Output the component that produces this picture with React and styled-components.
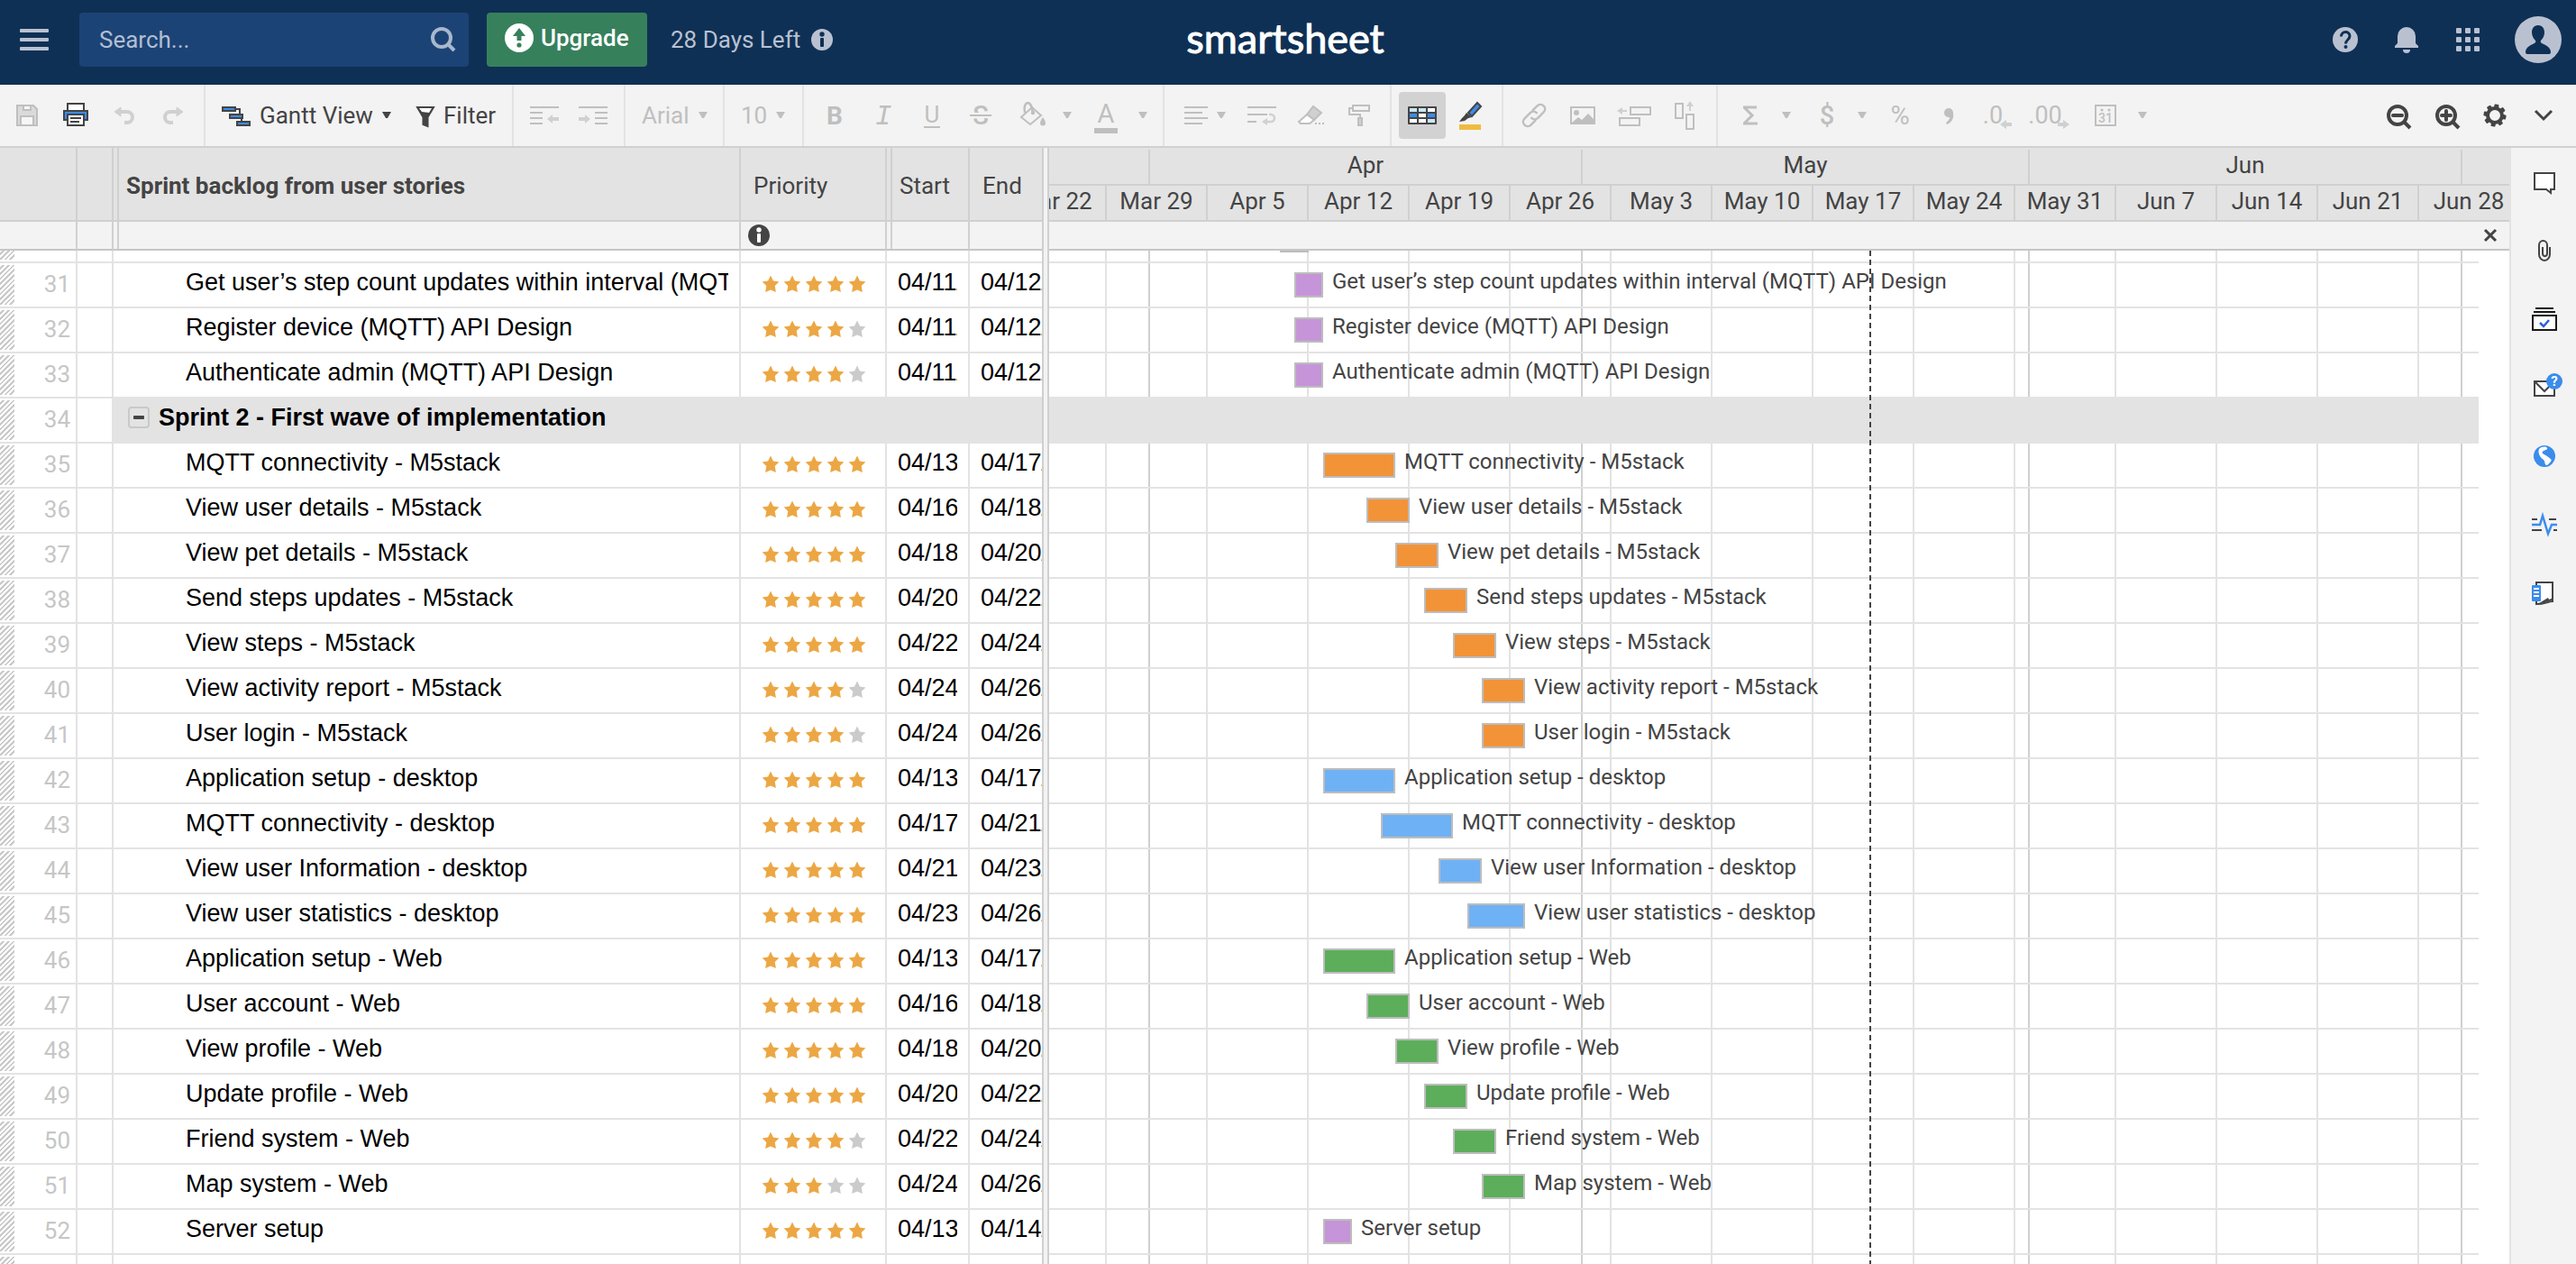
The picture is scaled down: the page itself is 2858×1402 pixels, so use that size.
import React from "react";
import styled, { createGlobalStyle, css } from "styled-components";

const GlobalStyle = createGlobalStyle`
  *, *::before, *::after { box-sizing: border-box; }
  html, body { margin: 0; height: 100%; }
  #root { height: 100%; }
  body { overflow: hidden; background: #fff; }
  body, button, input { font-family: Roboto, "Liberation Sans", sans-serif; font-size: 26px; }
  button { margin: 0; padding: 0; border: 0; background: none; color: inherit; cursor: pointer; }
  svg { display: block; flex: none; overflow: visible; }
`;

const DAY = 16;
const WEEK = 112;
const CHART_LEAD = 64;
const INK = "#444444";
const MUTED = "#bfbfbf";
const PALE = "#d0d0d0";
const BLUE = "#3b8ceb";

const C = { purple: "#c694d8", orange: "#f29337", blue: "#6fb1f5", green: "#5cae5a" };

/* start and end are days of April */
const TASKS = [
  { id: 31, name: "Get user’s step count updates within interval (MQTT) API Design", stars: 5, start: 11, end: 12, color: C.purple },
  { id: 32, name: "Register device (MQTT) API Design", stars: 4, start: 11, end: 12, color: C.purple },
  { id: 33, name: "Authenticate admin (MQTT) API Design", stars: 4, start: 11, end: 12, color: C.purple },
  { id: 34, name: "Sprint 2 - First wave of implementation", group: true },
  { id: 35, name: "MQTT connectivity - M5stack", stars: 5, start: 13, end: 17, color: C.orange },
  { id: 36, name: "View user details - M5stack", stars: 5, start: 16, end: 18, color: C.orange },
  { id: 37, name: "View pet details - M5stack", stars: 5, start: 18, end: 20, color: C.orange },
  { id: 38, name: "Send steps updates - M5stack", stars: 5, start: 20, end: 22, color: C.orange },
  { id: 39, name: "View steps - M5stack", stars: 5, start: 22, end: 24, color: C.orange },
  { id: 40, name: "View activity report - M5stack", stars: 4, start: 24, end: 26, color: C.orange },
  { id: 41, name: "User login - M5stack", stars: 4, start: 24, end: 26, color: C.orange },
  { id: 42, name: "Application setup - desktop", stars: 5, start: 13, end: 17, color: C.blue },
  { id: 43, name: "MQTT connectivity - desktop", stars: 5, start: 17, end: 21, color: C.blue },
  { id: 44, name: "View user Information - desktop", stars: 5, start: 21, end: 23, color: C.blue },
  { id: 45, name: "View user statistics - desktop", stars: 5, start: 23, end: 26, color: C.blue },
  { id: 46, name: "Application setup - Web", stars: 5, start: 13, end: 17, color: C.green },
  { id: 47, name: "User account - Web", stars: 5, start: 16, end: 18, color: C.green },
  { id: 48, name: "View profile - Web", stars: 5, start: 18, end: 20, color: C.green },
  { id: 49, name: "Update profile - Web", stars: 5, start: 20, end: 22, color: C.green },
  { id: 50, name: "Friend system - Web", stars: 4, start: 22, end: 24, color: C.green },
  { id: 51, name: "Map system - Web", stars: 3, start: 24, end: 26, color: C.green },
  { id: 52, name: "Server setup", stars: 5, start: 13, end: 14, color: C.purple },
];

const WEEKS = ["Mar 22", "Mar 29", "Apr 5", "Apr 12", "Apr 19", "Apr 26", "May 3", "May 10", "May 17", "May 24", "May 31", "Jun 7", "Jun 14", "Jun 21", "Jun 28"];
const MONTHS = [
  { label: "", width: 112 },
  { label: "Apr", width: 30 * DAY },
  { label: "May", width: 31 * DAY },
  { label: "Jun", width: 30 * DAY },
];

/* ---------- frame ---------- */

const Page = styled.div`
  height: 100vh;
  display: flex;
  flex-direction: column;
  overflow: hidden;
  color: ${INK};
`;

const TopBar = styled.header`
  flex: none;
  height: 94px;
  padding: 0 16px 6px 22px;
  display: grid;
  grid-template-columns: 1fr auto 1fr;
  align-items: center;
  background: #0f3055;
  color: #b9c1d1;
`;

const TopLeft = styled.div`
  display: flex;
  align-items: center;
`;

const TopRight = styled.nav`
  display: flex;
  align-items: center;
  justify-content: flex-end;
`;

const SearchBox = styled.label`
  width: 432px;
  height: 60px;
  margin: 0 20px 0 34px;
  padding: 0 14px 0 22px;
  display: flex;
  align-items: center;
  border-radius: 4px;
  background: #1c4375;
`;

const SearchInput = styled.input`
  flex: 1;
  min-width: 0;
  padding: 0;
  border: 0;
  outline: 0;
  background: none;
  color: #b9c8dc;
  &::placeholder { color: #b1bfd3; opacity: 1; }
`;

const UpgradeButton = styled.button`
  width: 178px;
  height: 60px;
  padding: 0 0 4px 20px;
  display: flex;
  align-items: center;
  gap: 8px;
  border-radius: 4px;
  background: #37805c;
  color: #fff;
  font-weight: 500;
`;

const Trial = styled.span`
  margin-left: 26px;
  display: flex;
  align-items: center;
  gap: 12px;
`;

const Logo = styled.span`
  padding: 0 12px 4px 0;
  font-family: Lato, sans-serif;
  font-size: 45px;
  line-height: 60px;
  color: #fff;
  -webkit-text-stroke: 1px #fff;
`;

const TopButton = styled.button`
  width: 68px;
  height: 60px;
  display: flex;
  align-items: center;
  justify-content: center;
`;

const Avatar = styled.button`
  margin-left: 18px;
`;

/* ---------- toolbar ---------- */

const Toolbar = styled.div`
  flex: none;
  height: 70px;
  display: flex;
  border-bottom: 2px solid #d0d0d0;
  background: #f3f3f3;
`;

const Group = styled.div`
  display: flex;
  align-items: center;
  padding: 0 ${(p) => p.$end ?? p.$pad ?? 7}px 0 ${(p) => p.$pad ?? 7}px;
  border-right: 2px solid #e3e3e3;
`;

const LastGroup = styled(Group)`
  border-right: 0;
`;

const RightGroup = styled.div`
  margin-left: auto;
  padding-right: 9px;
  display: flex;
  align-items: center;
`;

const Tool = styled.button`
  width: ${(p) => p.$w ?? 54}px;
  height: 52px;
  display: flex;
  align-items: center;
  justify-content: center;
  border-radius: 4px;
  ${(p) => p.$on && css`background: #d2d2d2;`}
`;

const LabelTool = styled.button`
  width: ${(p) => p.$w}px;
  height: 52px;
  padding-left: ${(p) => p.$indent ?? 18}px;
  display: flex;
  align-items: center;
  gap: 10px;
  white-space: nowrap;
  color: ${(p) => (p.$muted ? MUTED : INK)};
`;

/* ---------- sheet ---------- */

const Workspace = styled.main`
  flex: 1;
  min-height: 0;
  display: flex;
`;

const GridPane = styled.section`
  flex: none;
  width: 1158px;
  overflow: hidden;
  border-right: 2px solid #d0d0d0;
`;

const Splitter = styled.div`
  flex: none;
  width: 6px;
  border-right: 2px solid #d0d0d0;
  background: #f3f3f3;
`;

const Sheet = styled.table`
  width: 1156px;
  table-layout: fixed;
  border-collapse: separate;
  border-spacing: 0;
`;

const doubleRule = css`
  background-image: linear-gradient(#d0d0d0, #d0d0d0);
  background-size: 2px 100%;
  background-position: 4px 0;
  background-repeat: no-repeat;
`;

const HeadCell = styled.th`
  height: 82px;
  padding: 4px 0 0 14px;
  border-right: 2px solid #d0d0d0;
  border-bottom: 2px solid #d0d0d0;
  background-color: #e3e3e3;
  text-align: left;
  white-space: nowrap;
  font-weight: ${(p) => (p.$bold ? 700 : 400)};
  ${(p) => p.$double && doubleRule}
  &:last-child { border-right: 0; }
`;

const InfoCell = styled.td`
  height: 32px;
  padding: 0 0 0 8px;
  border-right: 2px solid #d0d0d0;
  border-bottom: 2px solid #c6c6c6;
  background-color: #f3f3f3;
  ${(p) => p.$double && doubleRule}
  &:last-child { border-right: 0; }
`;

const Row = styled.tr`
  height: ${(p) => p.$h ?? 50}px;
`;

const Cell = styled.td`
  padding: 0;
  vertical-align: top;
  border-right: 2px solid #e3e3e3;
  border-bottom: 2px solid #e3e3e3;
  ${(p) => p.$shade && css`background: #e3e3e3;`}
  &:last-child { border-right: 0; }
`;

const NumberCell = styled(Cell)`
  padding-right: 6px;
  line-height: 46px;
  text-align: right;
  color: #c6c6c6;
  background: repeating-linear-gradient(135deg, #fff 0 2px, #c9c9c9 2px 4px) no-repeat left bottom 2px / 16px 44px;
`;

const CellText = styled.div`
  height: 42px;
  margin: 0 ${(p) => (p.$open ? 0 : 12)}px 0 ${(p) => (p.$child ? 80 : 12)}px;
  overflow: hidden;
  white-space: nowrap;
  font-family: "Liberation Sans", Arial, sans-serif;
  font-size: 27px;
  line-height: 42px;
  color: #000;
`;

const GroupTitle = styled.div`
  height: 42px;
  padding-left: 16px;
  display: flex;
  align-items: center;
  gap: 10px;
  font-family: "Liberation Sans", Arial, sans-serif;
  font-size: 27px;
  font-weight: 700;
  line-height: 42px;
  white-space: nowrap;
  color: #000;
`;

const Collapse = styled.button`
  width: 24px;
  height: 24px;
  display: flex;
  align-items: center;
  justify-content: center;
  border: 2px solid #c9c9c9;
  border-radius: 4px;
`;

const StarBox = styled.div`
  padding: 13px 0 0 21px;
`;

/* ---------- chart ---------- */

const ChartPane = styled.section`
  flex: 1;
  min-width: 0;
  display: flex;
  flex-direction: column;
  overflow: hidden;
`;

const Months = styled.div`
  flex: none;
  height: 42px;
  padding-top: 2px;
  display: flex;
  border-bottom: 2px solid #d0d0d0;
  background: #e3e3e3;
`;

const Month = styled.div`
  flex: none;
  width: ${(p) => p.$w}px;
  border-right: 2px solid #d0d0d0;
  text-align: center;
  line-height: 34px;
`;

const Weeks = styled.div`
  flex: none;
  height: 40px;
  display: flex;
  justify-content: flex-start;
  overflow: hidden;
  border-bottom: 2px solid #d0d0d0;
  background: #e3e3e3;
`;

const Week = styled.div`
  flex: none;
  width: ${WEEK}px;
  border-right: 2px solid #d0d0d0;
  text-align: center;
  line-height: 34px;
  white-space: nowrap;
  &:first-child { margin-left: ${CHART_LEAD - WEEK}px; }
`;

const ChartStrip = styled.div`
  flex: none;
  height: 32px;
  padding-right: 14px;
  display: flex;
  align-items: center;
  justify-content: flex-end;
  border-bottom: 2px solid #c6c6c6;
  background: #f3f3f3;
`;

const Canvas = styled.div`
  flex: 1;
  min-height: 0;
  margin-right: 34px;
  position: relative;
  overflow: hidden;
  background: repeating-linear-gradient(to right, transparent 0 ${WEEK - 2}px, #e3e3e3 ${WEEK - 2}px ${WEEK}px) ${CHART_LEAD - WEEK}px 0 / 4032px 100%;
`;

const MonthRules = styled.div`
  position: absolute;
  inset: 0;
  display: flex;
`;

const MonthRule = styled.div`
  flex: none;
  width: ${(p) => p.$w}px;
  border-right: 2px solid #d0d0d0;
`;

const ChartRow = styled.div`
  position: relative;
  height: ${(p) => p.$h ?? 50}px;
  border-bottom: 2px solid #e3e3e3;
  ${(p) => p.$h && css`overflow: hidden;`}
  ${(p) => p.$shade && css`background: #e3e3e3;`}
`;

const Bar = styled.div`
  position: absolute;
  bottom: 10px;
  height: 28px;
  border: 2px solid #bdbdbd;
  background: ${(p) => p.$color};
`;

const BarLabel = styled.span`
  position: absolute;
  top: 0;
  font-size: 24px;
  line-height: 40px;
  white-space: nowrap;
`;

const Today = styled.div`
  position: absolute;
  top: 0;
  bottom: 0;
  left: 910px;
  width: 2px;
  background: repeating-linear-gradient(#444 0 6px, transparent 6px 10px);
`;

const Rail = styled.aside`
  flex: none;
  width: 74px;
  padding-left: 2px;
  border-left: 2px solid #e3e3e3;
  background: #f3f3f3;
`;

const RailButton = styled.button`
  width: 100%;
  height: 76px;
  display: flex;
  align-items: center;
  justify-content: center;
`;

/* ---------- icons ---------- */

/* Toolbar icons share a 44 x 36 box with its origin in the centre. */
const Ico = ({ w = 44, h = 36, children }) => (
  <svg width={w} height={h} viewBox={`${-w / 2} ${-h / 2} ${w} ${h}`} fill="none" aria-hidden="true">
    {children}
  </svg>
);

const Caret = ({ color = MUTED }) => (
  <svg width="10" height="8" viewBox="0 0 10 8" aria-hidden="true">
    <path d="M0 0H10L6 7H4Z" fill={color} />
  </svg>
);

const Info = ({ fill, dot }) => (
  <svg width="24" height="24" viewBox="0 0 24 24" aria-hidden="true">
    <circle cx="12" cy="12" r="12" fill={fill} />
    <circle cx="12" cy="6" r="2.7" fill={dot} />
    <rect x="10" y="10" width="4" height="10" rx="1" fill={dot} />
  </svg>
);

const Stars = ({ count }) => (
  <svg width="120" height="20" viewBox="0 0 120 20" role="img" aria-label={`${count} of 5`}>
    {[0, 1, 2, 3, 4].map((i) => (
      <path
        key={i}
        transform={`translate(${12 + i * 24} 10)`}
        d="M0 -9.5L2.9 -3.5L9.4 -2.6L4.7 2L5.9 9L0 6.4L-5.9 9L-4.7 2L-9.4 -2.6L-2.9 -3.5Z"
        fill={i < count ? "#eca744" : "#cbcbcb"}
      />
    ))}
  </svg>
);

const Letter = ({ children, size = 28, weight = 400, y = 10, x = 0, family = "Roboto", style = "normal" }) => (
  <text x={x} y={y} textAnchor="middle" fill={MUTED} fontFamily={`"${family}", sans-serif`} fontSize={size} fontWeight={weight} fontStyle={style}>
    {children}
  </text>
);

const SaveIcon = () => (
  <Ico>
    <path d="M-11 -11H7L11 -7V11H-11Z" fill="#dadada" stroke={MUTED} strokeWidth="2" />
    <path d="M-4 -11H4V-6H-4Z M-7 1H7V11H-7Z" fill="#f6f6f6" stroke={MUTED} strokeWidth="2" />
  </Ico>
);

const PrintIcon = () => (
  <Ico>
    <path d="M-9 -5V-13H9V-5" fill="#fff" stroke={INK} strokeWidth="2" />
    <path d="M-13 5V-5H13V5H9V-1H-9V5Z" fill={BLUE} stroke={INK} strokeWidth="2" />
    <path d="M-9 -1H9V11H-9Z" fill="#fff" stroke={INK} strokeWidth="2" />
    <path d="M-6 3H6M-6 7H4" stroke={INK} strokeWidth="2" />
  </Ico>
);

const UndoIcon = ({ flip }) => (
  <Ico>
    <g transform={flip ? "scale(-1 1)" : undefined}>
      <path d="M-5 -4H3A6 6 0 0 1 3 8H0" stroke={PALE} strokeWidth="4" />
      <path d="M-11 -4L-4 -9V1Z" fill={PALE} stroke={PALE} strokeLinejoin="round" />
    </g>
  </Ico>
);

const GanttIcon = () => (
  <Ico w={32} h={24}>
    <path d="M0 -7H4V0M6 1V8" stroke={INK} strokeWidth="2" />
    <path d="M-15 -9H-1V-5H-15ZM-7 -1H7V3H-7ZM1 7H15V11H1Z" fill={BLUE} stroke={INK} strokeWidth="2" />
  </Ico>
);

const FilterIcon = () => (
  <Ico w={20} h={26}>
    <path d="M-9 -9H9L2.500 2V12L-2.500 10V2Z" fill={INK} stroke={INK} strokeWidth="2" />
    <path d="M-7 -8H7L4 -3L-4 -4Z" fill="#fff" />
  </Ico>
);

const OutdentIcon = ({ flip }) => (
  <Ico>
    <g transform={flip ? "scale(-1 1)" : undefined}>
      <path d="M-16 -9H16M-16 -3H-2M-16 3H-2M-16 9H-2" stroke={MUTED} strokeWidth="2" />
      <path d="M3 4L9 -1V2H16V6H9V9Z" fill={PALE} />
    </g>
  </Ico>
);

const FillIcon = () => (
  <Ico>
    <path d="M-9 2L3 -9L13 0L1 10Z" stroke={MUTED} strokeWidth="2" />
    <path d="M-5 -3C-6 -9 -5 -13 -2 -14C2 -14 3 -8 4 -3" stroke={MUTED} strokeWidth="2.500" />
    <circle cx="4" cy="-3" r="2.200" fill={MUTED} />
    <path d="M15 2C17 5 18 7 18 8.500A3 3 0 0 1 12 8.500C12 7 13 5 15 2Z" fill={MUTED} />
  </Ico>
);

const FontColorIcon = () => (
  <Ico>
    <Letter x={1} y={8} size={29}>A</Letter>
    <rect x="-12" y="14" width="26" height="6" fill={MUTED} />
  </Ico>
);

const UnderlineIcon = () => (
  <Ico>
    <Letter y={8} size={26}>U</Letter>
    <path d="M-9 13H9" stroke={MUTED} strokeWidth="2" />
  </Ico>
);

const StrikeIcon = () => (
  <Ico>
    <Letter size={29} weight={500}>S</Letter>
    <path d="M-13 0H13" stroke="#f3f3f3" strokeWidth="6" />
    <path d="M-12 0H12" stroke={MUTED} strokeWidth="2" />
  </Ico>
);

const AlignIcon = () => (
  <Ico w={26} h={24}>
    <path d="M-13 -9H13M-13 -3H7M-13 3H13M-13 9H7" stroke={MUTED} strokeWidth="2" />
  </Ico>
);

const WrapIcon = () => (
  <Ico>
    <path d="M-16 -9H16M-16 -1H6M-16 7H-6" stroke={MUTED} strokeWidth="2" />
    <path d="M8 -1H10A4 4 0 0 1 10 7H6" stroke={PALE} strokeWidth="2.500" />
    <path d="M0 7L6 3V11Z" fill={PALE} />
  </Ico>
);

const EraserIcon = () => (
  <Ico>
    <path d="M-4 -1L3 -10L12 -3L4 5Z" fill={PALE} stroke={MUTED} strokeWidth="2" />
    <path d="M-4 -1L4 5L-1 9H-11L-13 7Z" fill="#fff" stroke={MUTED} strokeWidth="2" />
    <path d="M5 9H7M9 9H11M13 9H15" stroke={MUTED} strokeWidth="2" />
  </Ico>
);

const RollerIcon = () => (
  <Ico>
    <path d="M-7 -11H11V-5H-7ZM-7 -8H-11V-1H1V2" stroke={MUTED} strokeWidth="2" />
    <path d="M-1 3H3V11H-1Z" fill={PALE} stroke={MUTED} strokeWidth="2" />
  </Ico>
);

const CardIcon = () => (
  <Ico>
    <rect x="-16" y="-10" width="32" height="20" rx="1" fill={INK} />
    {[0, 1, 2].map((r) =>
      [0, 1, 2].map((c) => {
        const fills = ["#c9e6f5", "#c9e6f5", "#fff", BLUE, "#fff", BLUE, "#fff", "#fff", "#c9e6f5"];
        return <rect key={`${r}${c}`} x={-14 + c * 10} y={-8 + r * 6} width="8" height="4" fill={fills[r * 3 + c]} />;
      })
    )}
  </Ico>
);

const HighlightIcon = () => (
  <Ico>
    <path d="M8 -14L12 -10L2 1L-2 -3Z" fill={BLUE} stroke={INK} strokeWidth="2" />
    <path d="M-4 -3L2 2L-2 3L-6 6L-12 7L-9 3L-6 0Z" fill={INK} />
    <rect x="-12" y="10" width="24" height="6" fill="#f0bb41" />
  </Ico>
);

const LinkIcon = () => (
  <Ico>
    <g transform="rotate(-45)" stroke={MUTED} strokeWidth="2.500" strokeLinecap="round">
      <path d="M-3 5H-10A5 5 0 0 1 -10 -5H-1A5 5 0 0 1 4 0" />
      <path d="M3 -5H10A5 5 0 0 1 10 5H1A5 5 0 0 1 -4 0" />
    </g>
  </Ico>
);

const ImageIcon = () => (
  <Ico>
    <rect x="-13" y="-9" width="26" height="18" stroke={MUTED} strokeWidth="2" />
    <circle cx="-7" cy="-3" r="3" fill={MUTED} />
    <path d="M-12 8L-5 2L-1 5L6 -2L12 4V9H-12Z" fill={MUTED} />
  </Ico>
);

const InsertRowIcon = () => (
  <Ico>
    <path d="M-1 -9H21V-1H-1ZM-13 3H9V11H-13Z" stroke={MUTED} strokeWidth="2" />
    <path d="M-16 -5L-10 -9V-6H-5V-4H-10V-1Z" fill={PALE} />
  </Ico>
);

const InsertColumnIcon = () => (
  <Ico>
    <path d="M-5 -13H3V3H-5ZM7 -1H15V15H7Z" stroke={MUTED} strokeWidth="2" />
    <path d="M11 -16L15 -10H12V-5H10V-10H7Z" fill={PALE} />
  </Ico>
);

const DecimalIcon = ({ text, left }) => (
  <Ico>
    <Letter x={-5} y={9} size={27}>{text}</Letter>
    <path
      transform={left ? "translate(10 10)" : "translate(15 10) scale(-1 1)"}
      d="M-7 0L0 -5V-2H6V2H0V5Z"
      fill={PALE}
    />
  </Ico>
);

const CalendarIcon = () => (
  <Ico>
    <rect x="-11" y="-11" width="22" height="22" stroke={MUTED} strokeWidth="2" />
    <circle cx="-4" cy="-6" r="1.600" fill={MUTED} />
    <circle cx="4" cy="-6" r="1.600" fill={MUTED} />
    <Letter size={14} weight={500} y={8}>31</Letter>
  </Ico>
);

const ZoomIcon = ({ plus }) => (
  <Ico>
    <circle cx="0" cy="0" r="10" stroke={INK} strokeWidth="4" />
    <path d="M8 8L14 14" stroke={INK} strokeWidth="4" />
    <path d={plus ? "M-5 0H5M0 -5V5" : "M-5 0H5"} stroke={INK} strokeWidth="4" strokeLinecap="round" />
  </Ico>
);

const GearIcon = () => (
  <Ico>
    {[0, 45, 90, 135, 180, 225, 270, 315].map((a) => (
      <rect key={a} x="-2.500" y="-12.500" width="5" height="6" rx="1" fill={INK} transform={`rotate(${a + 10})`} />
    ))}
    <circle r="8" stroke={INK} strokeWidth="4" />
  </Ico>
);

const RAIL = [
  ["Conversations", <Ico key="c"><path d="M-11 -10H11V8H7V12L2 8H-11Z" fill="#fff" stroke={INK} strokeWidth="2" /></Ico>],
  ["Attachments", (
    <Ico key="a">
      <path d="M6 -4V4A6 7 0 0 1 -6 4V-6A4.500 5 0 0 1 3 -6V3A2 2.500 0 0 1 -2 3V-4" stroke={INK} strokeWidth="2" />
    </Ico>
  )],
  ["Proofs", (
    <Ico key="p">
      <path d="M-10 -12H10M-12 -8H12" stroke="#1a1a1a" strokeWidth="2" />
      <rect x="-13" y="-4" width="26" height="16" fill="#fff" stroke="#1a1a1a" strokeWidth="2" />
      <path d="M-5 4L-1 8L5 1" stroke="#2a5fdc" strokeWidth="2.500" />
    </Ico>
  )],
  ["Update requests", (
    <Ico key="u">
      <rect x="-11" y="-7" width="22" height="16" fill="#fff" stroke={INK} strokeWidth="2" />
      <path d="M-10 -6L0 4L10 -6" stroke={INK} strokeWidth="2" />
      <circle cx="11" cy="-7" r="9" fill={BLUE} />
      <text x="11" y="-2" textAnchor="middle" fontSize="15" fontWeight="700" fill="#fff">?</text>
    </Ico>
  )],
  ["Publish", (
    <Ico key="g">
      <circle r="12" fill={BLUE} />
      <path d="M-6 -8C-3 -11 2 -11 3 -9C4 -7 0 -7 -2 -5C-4 -3 1 -2 3 0C6 3 9 3 7 6C5 8 4 10 2 10C0 9 1 6 -1 4C-4 2 -8 -3 -6 -8Z" fill="#fff" />
    </Ico>
  )],
  ["Activity log", (
    <Ico key="l">
      <path d="M-14 -6H-8M5 -6H13M-14 6H-3M10 6H14" stroke={INK} strokeWidth="2" />
      <path d="M-14 0H-5L-2 -10L4 10L8 0H14" stroke={BLUE} strokeWidth="2.500" />
    </Ico>
  )],
  ["Summary", (
    <Ico key="s">
      <path d="M-9 -12H9V9C4 9 0 12 -9 12Z" fill="#fff" stroke={INK} strokeWidth="2" />
      <path d="M-6 11L4 5L5 7L10 5V8C5 8 0 11 -6 11Z" fill={INK} />
      <rect x="-14" y="-9" width="10" height="18" rx="1" fill={BLUE} />
      <path d="M-12 -5H-6M-12 -1H-6M-12 3H-6" stroke="#fff" strokeWidth="2" />
    </Ico>
  )],
];

/* ---------- parts ---------- */

function Header() {
  return (
    <TopBar>
      <TopLeft>
        <button aria-label="Menu">
          <svg width="32" height="24" viewBox="0 0 32 24" fill="#b9c1d1">
            <rect width="32" height="4" rx="1" />
            <rect y="10" width="32" height="4" rx="1" />
            <rect y="20" width="32" height="4" rx="1" />
          </svg>
        </button>
        <SearchBox>
          <SearchInput type="text" placeholder="Search..." aria-label="Search" />
          <svg width="28" height="28" viewBox="0 0 28 28" fill="none" stroke="#a9b7cd" strokeWidth="4">
            <circle cx="12" cy="12" r="10" />
            <path d="M19 19L26 26" />
          </svg>
        </SearchBox>
        <UpgradeButton>
          <svg width="32" height="32" viewBox="0 0 32 32">
            <circle cx="16" cy="16" r="16" fill="#fff" />
            <path d="M16 5L23 14H18.500V19H13.500V14H9Z" fill="#37805c" />
            <circle cx="16" cy="24" r="2.600" fill="#37805c" />
          </svg>
          Upgrade
        </UpgradeButton>
        <Trial>
          28 Days Left
          <Info fill="#b9c1d1" dot="#0f3055" />
        </Trial>
      </TopLeft>
      <Logo>smartsheet</Logo>
      <TopRight>
        <TopButton aria-label="Help">
          <svg width="28" height="28" viewBox="0 0 28 28">
            <circle cx="14" cy="14" r="14" fill="#b9c1d1" />
            <path d="M9.500 10.500C9.500 4 19 4 19 10C19 14 14.500 14 14.500 18.500" fill="none" stroke="#0f3055" strokeWidth="3" />
            <circle cx="14.500" cy="22" r="2" fill="#0f3055" />
          </svg>
        </TopButton>
        <TopButton aria-label="Notifications">
          <svg width="26" height="30" viewBox="0 0 26 30" fill="#b9c1d1">
            <path d="M3 11A10 10 0 0 1 23 11V19L26 22V24H0V22L3 19Z" />
            <path d="M9 26H17A4 4 0 0 1 9 26Z" />
          </svg>
        </TopButton>
        <TopButton aria-label="Apps">
          <svg width="26" height="26" viewBox="0 0 26 26" fill="#b9c1d1">
            {[0, 10, 20].map((y) => [0, 10, 20].map((x) => <rect key={`${x}-${y}`} x={x} y={y} width="6" height="6" rx="1" />))}
          </svg>
        </TopButton>
        <Avatar aria-label="Account">
          <svg width="52" height="52" viewBox="0 0 52 52">
            <circle cx="26" cy="26" r="26" fill="#b9c1d1" />
            <path
              d="M26 10C31 10 33 14 33 18C33 22 31 25 29 27C28 29 30 30 32 31C37 33 40 36 40 40Q40 42 38 42H14Q12 42 12 40C12 36 15 33 20 31C22 30 24 29 23 27C21 25 19 22 19 18C19 14 21 10 26 10Z"
              fill="#0f3055"
            />
          </svg>
        </Avatar>
      </TopRight>
    </TopBar>
  );
}

function ToolbarRow() {
  return (
    <Toolbar>
      <Group $pad={3} $end={7}>
        <Tool aria-label="Save"><SaveIcon /></Tool>
        <Tool aria-label="Print"><PrintIcon /></Tool>
        <Tool aria-label="Undo"><UndoIcon /></Tool>
        <Tool aria-label="Redo"><UndoIcon flip /></Tool>
      </Group>
      <Group $pad={0}>
        <LabelTool $w={234}><GanttIcon />Gantt View<Caret color={INK} /></LabelTool>
        <LabelTool $w={106} $indent={0}><FilterIcon />Filter</LabelTool>
      </Group>
      <Group>
        <Tool aria-label="Outdent"><OutdentIcon /></Tool>
        <Tool aria-label="Indent"><OutdentIcon flip /></Tool>
      </Group>
      <Group $pad={0}>
        <LabelTool $w={108} $muted>Arial<Caret /></LabelTool>
      </Group>
      <Group $pad={0}>
        <LabelTool $w={86} $muted>10<Caret /></LabelTool>
      </Group>
      <Group>
        <Tool aria-label="Bold"><Ico><Letter weight={700}>B</Letter></Ico></Tool>
        <Tool aria-label="Italic"><Ico><Letter family="Liberation Mono" style="italic" size={31}>I</Letter></Ico></Tool>
        <Tool aria-label="Underline"><UnderlineIcon /></Tool>
        <Tool aria-label="Strikethrough"><StrikeIcon /></Tool>
        <Tool aria-label="Background color"><FillIcon /></Tool>
        <Tool $w={30} aria-label="Background colors"><Caret /></Tool>
        <Tool aria-label="Font color"><FontColorIcon /></Tool>
        <Tool $w={30} aria-label="Font colors"><Caret /></Tool>
      </Group>
      <Group>
        <LabelTool $w={74} $indent={15} aria-label="Alignment"><AlignIcon /><Caret /></LabelTool>
        <Tool aria-label="Wrap text"><WrapIcon /></Tool>
        <Tool aria-label="Clear format"><EraserIcon /></Tool>
        <Tool aria-label="Format painter"><RollerIcon /></Tool>
      </Group>
      <Group $pad={8}>
        <Tool $w={52} $on aria-label="Conditional formatting"><CardIcon /></Tool>
        <Tool aria-label="Highlight changes"><HighlightIcon /></Tool>
      </Group>
      <Group $end={13}>
        <Tool aria-label="Link"><LinkIcon /></Tool>
        <Tool aria-label="Image"><ImageIcon /></Tool>
        <Tool aria-label="Insert row"><InsertRowIcon /></Tool>
        <Tool aria-label="Insert column"><InsertColumnIcon /></Tool>
      </Group>
      <LastGroup>
        <Tool aria-label="Sum"><Ico><path d="M-6 -9H9M-6 9H10M-5 -9L4 0L-5 9" stroke={MUTED} strokeWidth="3" /></Ico></Tool>
        <Tool $w={30} aria-label="Functions"><Caret /></Tool>
        <Tool aria-label="Currency"><Ico><Letter x={3} size={29} weight={500}>$</Letter></Ico></Tool>
        <Tool $w={30} aria-label="Currencies"><Caret /></Tool>
        <Tool aria-label="Percent"><Ico><Letter size={29}>%</Letter></Ico></Tool>
        <Tool aria-label="Thousands">
          <Ico><path d="M-5 -3A5 5 0 0 1 5 -3C6 4 3 8 -2 10L-3 8C0 6 1 4 1 2C-3 2 -5 0 -5 -3Z" fill={MUTED} /></Ico>
        </Tool>
        <Tool aria-label="Decrease decimal"><DecimalIcon text=".0" left /></Tool>
        <Tool $w={62} aria-label="Increase decimal"><DecimalIcon text=".00" /></Tool>
        <Tool $w={62} aria-label="Date format"><CalendarIcon /></Tool>
        <Tool $w={20} aria-label="Date formats"><Caret /></Tool>
      </LastGroup>
      <RightGroup>
        <Tool aria-label="Zoom out"><ZoomIcon /></Tool>
        <Tool aria-label="Zoom in"><ZoomIcon plus /></Tool>
        <Tool aria-label="Settings"><GearIcon /></Tool>
        <Tool aria-label="Collapse"><Ico><path d="M-9 -5L0 4L9 -5" stroke={INK} strokeWidth="3" /></Ico></Tool>
      </RightGroup>
    </Toolbar>
  );
}

function TaskRow({ task }) {
  if (task.group) {
    return (
      <Row>
        <NumberCell>{task.id}</NumberCell>
        <Cell />
        <Cell $shade>
          <GroupTitle>
            <Collapse aria-label="Collapse section">
              <svg width="12" height="4" viewBox="0 0 12 4"><rect width="12" height="4" rx="1" fill={INK} /></svg>
            </Collapse>
            {task.name}
          </GroupTitle>
        </Cell>
        <Cell $shade />
        <Cell $shade />
        <Cell $shade />
      </Row>
    );
  }
  return (
    <Row>
      <NumberCell>{task.id}</NumberCell>
      <Cell />
      <Cell><CellText $child>{task.name}</CellText></Cell>
      <Cell><StarBox><Stars count={task.stars} /></StarBox></Cell>
      <Cell><CellText>{`04/${task.start}/20`}</CellText></Cell>
      <Cell><CellText $open>{`04/${task.end}/20`}</CellText></Cell>
    </Row>
  );
}

function BlankRow({ height }) {
  return (
    <Row $h={height}>
      <NumberCell />
      <Cell /><Cell /><Cell /><Cell /><Cell />
    </Row>
  );
}

function Grid() {
  return (
    <GridPane>
      <Sheet>
        <colgroup>
          <col width="86" /><col width="40" /><col width="696" /><col width="162" /><col width="92" /><col width="80" />
        </colgroup>
        <thead>
          <tr>
            <HeadCell />
            <HeadCell />
            <HeadCell $double $bold scope="col">Sprint backlog from user stories</HeadCell>
            <HeadCell scope="col">Priority</HeadCell>
            <HeadCell $double scope="col">Start</HeadCell>
            <HeadCell scope="col">End</HeadCell>
          </tr>
          <tr>
            <InfoCell />
            <InfoCell />
            <InfoCell $double />
            <InfoCell><Info fill={INK} dot="#fff" /></InfoCell>
            <InfoCell $double />
            <InfoCell />
          </tr>
        </thead>
        <tbody>
          <BlankRow height={14} />
          {TASKS.map((t) => <TaskRow key={t.id} task={t} />)}
          <BlankRow height={50} />
        </tbody>
      </Sheet>
    </GridPane>
  );
}

/* x of a day of April on the chart */
const dayX = (day) => CHART_LEAD + (day + 2) * DAY;

function Chart() {
  return (
    <ChartPane>
      <Months>
        {MONTHS.map((m, i) => <Month key={i} $w={m.width}>{m.label}</Month>)}
      </Months>
      <Weeks>{WEEKS.map((w) => <Week key={w}>{w}</Week>)}</Weeks>
      <ChartStrip>
        <button aria-label="Close">
          <svg width="14" height="14" viewBox="0 0 14 14" fill="none" stroke={INK} strokeWidth="3">
            <path d="M1 1L13 13M13 1L1 13" />
          </svg>
        </button>
      </ChartStrip>
      <Canvas>
        <MonthRules>{MONTHS.map((m, i) => <MonthRule key={i} $w={m.width} />)}</MonthRules>
        <ChartRow $h={14}>
          <Bar $color={C.purple} style={{ left: dayX(10), width: 2 * DAY }} />
        </ChartRow>
        {TASKS.map((t) => (
          <ChartRow key={t.id} $shade={t.group}>
            {!t.group && (
              <>
                <Bar $color={t.color} style={{ left: dayX(t.start), width: (t.end - t.start + 1) * DAY }} />
                <BarLabel style={{ left: dayX(t.end + 1) + 10 }}>{t.name}</BarLabel>
              </>
            )}
          </ChartRow>
        ))}
        <Today />
      </Canvas>
    </ChartPane>
  );
}

export default function App() {
  return (
    <Page>
      <GlobalStyle />
      <Header />
      <ToolbarRow />
      <Workspace>
        <Grid />
        <Splitter />
        <Chart />
        <Rail>
          {RAIL.map(([label, icon]) => <RailButton key={label} aria-label={label}>{icon}</RailButton>)}
        </Rail>
      </Workspace>
    </Page>
  );
}
